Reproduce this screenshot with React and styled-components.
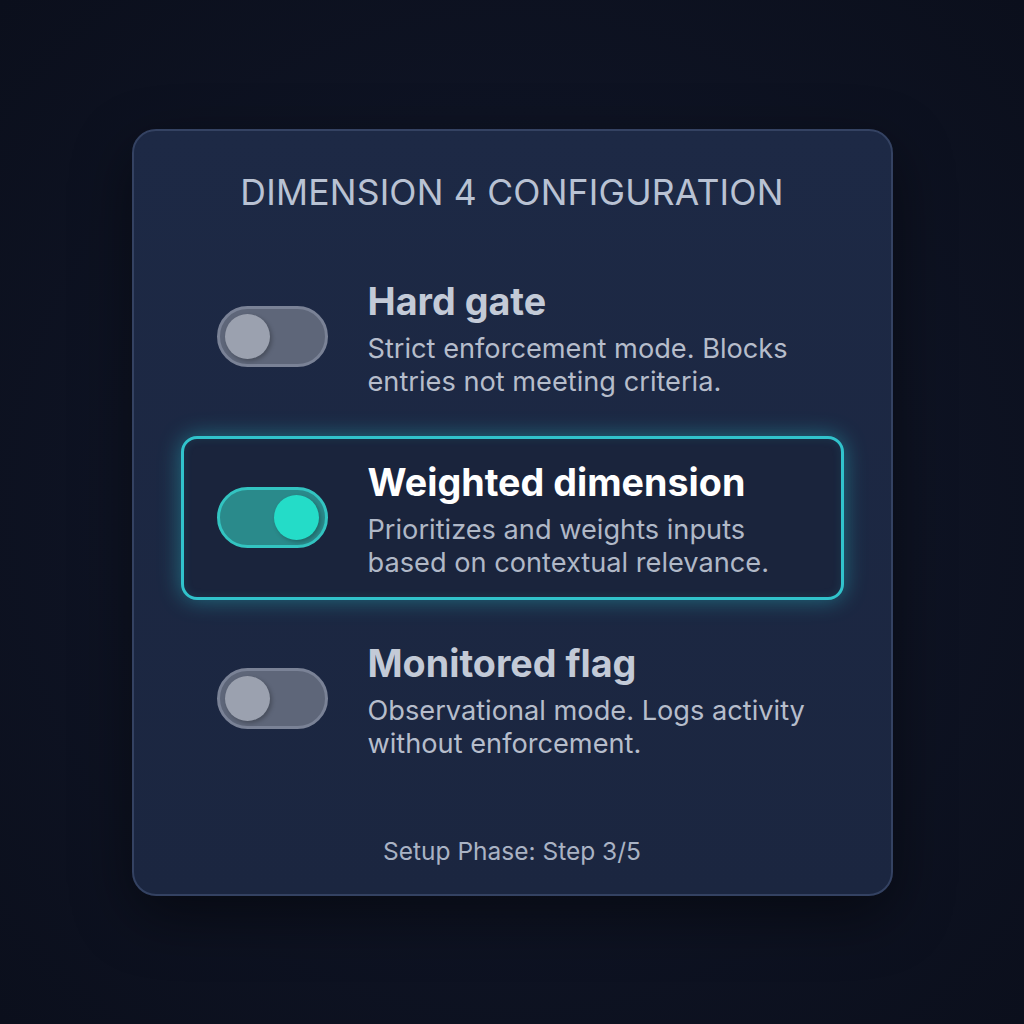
import React from "react";
import styled, { createGlobalStyle } from "styled-components";

const Global = createGlobalStyle`
  * { box-sizing: border-box; }
  html, body { margin: 0; padding: 0; }
  body {
    background: #0d1221;
    font-family: Inter, "Noto Sans", "Liberation Sans", sans-serif;
    -webkit-font-smoothing: antialiased;
  }
`;

const Page = styled.div`
  width: 1024px;
  height: 1024px;
  display: flex;
  align-items: center;
  justify-content: center;
  background: radial-gradient(circle at 50% 50%, #141b2e 0%, #0e1323 55%, #0b0f1c 100%);
`;

const Card = styled.div`
  width: 761px;
  height: 767px;
  border: 2px solid #344262;
  border-radius: 24px;
  background: linear-gradient(180deg, #1d2945 0%, #1b2640 100%);
  box-shadow: 0 20px 60px rgba(0, 0, 0, 0.45);
  padding: 42px 47px 29px;
  display: flex;
  flex-direction: column;
`;

const Heading = styled.h1`
  margin: 0 0 42px;
  height: 40px;
  line-height: 40px;
  text-align: center;
  font-size: 35.5px;
  font-weight: 400;
  letter-spacing: 0.2px;
  color: #b9c2d3;
  text-transform: uppercase;
`;

const List = styled.div`
  display: flex;
  flex-direction: column;
  gap: 17px;
`;

const Row = styled.div`
  height: 164px;
  display: flex;
  align-items: center;
  gap: 40px;
  padding-left: 33px;
  border: 3px solid ${(p) => (p.$active ? "#31c3cc" : "transparent")};
  border-radius: 16px;
  background: ${(p) => (p.$active ? "#1a243c" : "transparent")};
  box-shadow: ${(p) =>
    p.$active
      ? "0 0 22px rgba(40, 200, 210, 0.45), inset 0 0 10px rgba(40, 200, 210, 0.12)"
      : "none"};
`;

const Track = styled.div`
  flex: none;
  width: 111px;
  height: 61px;
  border-radius: 31px;
  border: 3px solid ${(p) => (p.$on ? "#33c4c1" : "#7a8296")};
  background: ${(p) => (p.$on ? "#2a8a8b" : "#5e6679")};
  display: flex;
  align-items: center;
  justify-content: ${(p) => (p.$on ? "flex-end" : "flex-start")};
  padding: 0 6px 0 5px;
`;

const Knob = styled.div`
  width: 45px;
  height: 45px;
  border-radius: 50%;
  background: ${(p) => (p.$on ? "#24dcc8" : "#9ba1af")};
  box-shadow: 2px 2px 4px rgba(0, 0, 0, 0.25);
`;

const Text = styled.div`
  display: flex;
  flex-direction: column;
  margin-top: 4px;
`;

const Title = styled.div`
  font-size: 37.7px;
  line-height: 44px;
  font-weight: 700;
  color: ${(p) => (p.$active ? "#ffffff" : "#c3cad7")};
  margin-bottom: 9px;
`;

const Desc = styled.div`
  font-size: 27.2px;
  line-height: 33px;
  font-weight: 400;
  color: ${(p) => (p.$active ? "#b0b8c7" : "#b6bdcb")};
`;

const Footer = styled.div`
  margin-top: 56px;
  height: 28px;
  line-height: 28px;
  text-align: center;
  font-size: 24.5px;
  color: #aab3c4;
`;

const items = [
  {
    title: "Hard gate",
    lines: ["Strict enforcement mode. Blocks", "entries not meeting criteria."],
    on: false,
  },
  {
    title: "Weighted dimension",
    lines: ["Prioritizes and weights inputs", "based on contextual relevance."],
    on: true,
  },
  {
    title: "Monitored flag",
    lines: ["Observational mode. Logs activity", "without enforcement."],
    on: false,
  },
];

export default function App() {
  return (
    <>
      <Global />
      <Page>
        <Card>
          <Heading>Dimension 4 Configuration</Heading>
          <List>
            {items.map((it) => (
              <Row key={it.title} $active={it.on}>
                <Track $on={it.on}>
                  <Knob $on={it.on} />
                </Track>
                <Text>
                  <Title $active={it.on}>{it.title}</Title>
                  <Desc $active={it.on}>
                    {it.lines[0]}
                    <br />
                    {it.lines[1]}
                  </Desc>
                </Text>
              </Row>
            ))}
          </List>
          <Footer>Setup Phase: Step 3/5</Footer>
        </Card>
      </Page>
    </>
  );
}
